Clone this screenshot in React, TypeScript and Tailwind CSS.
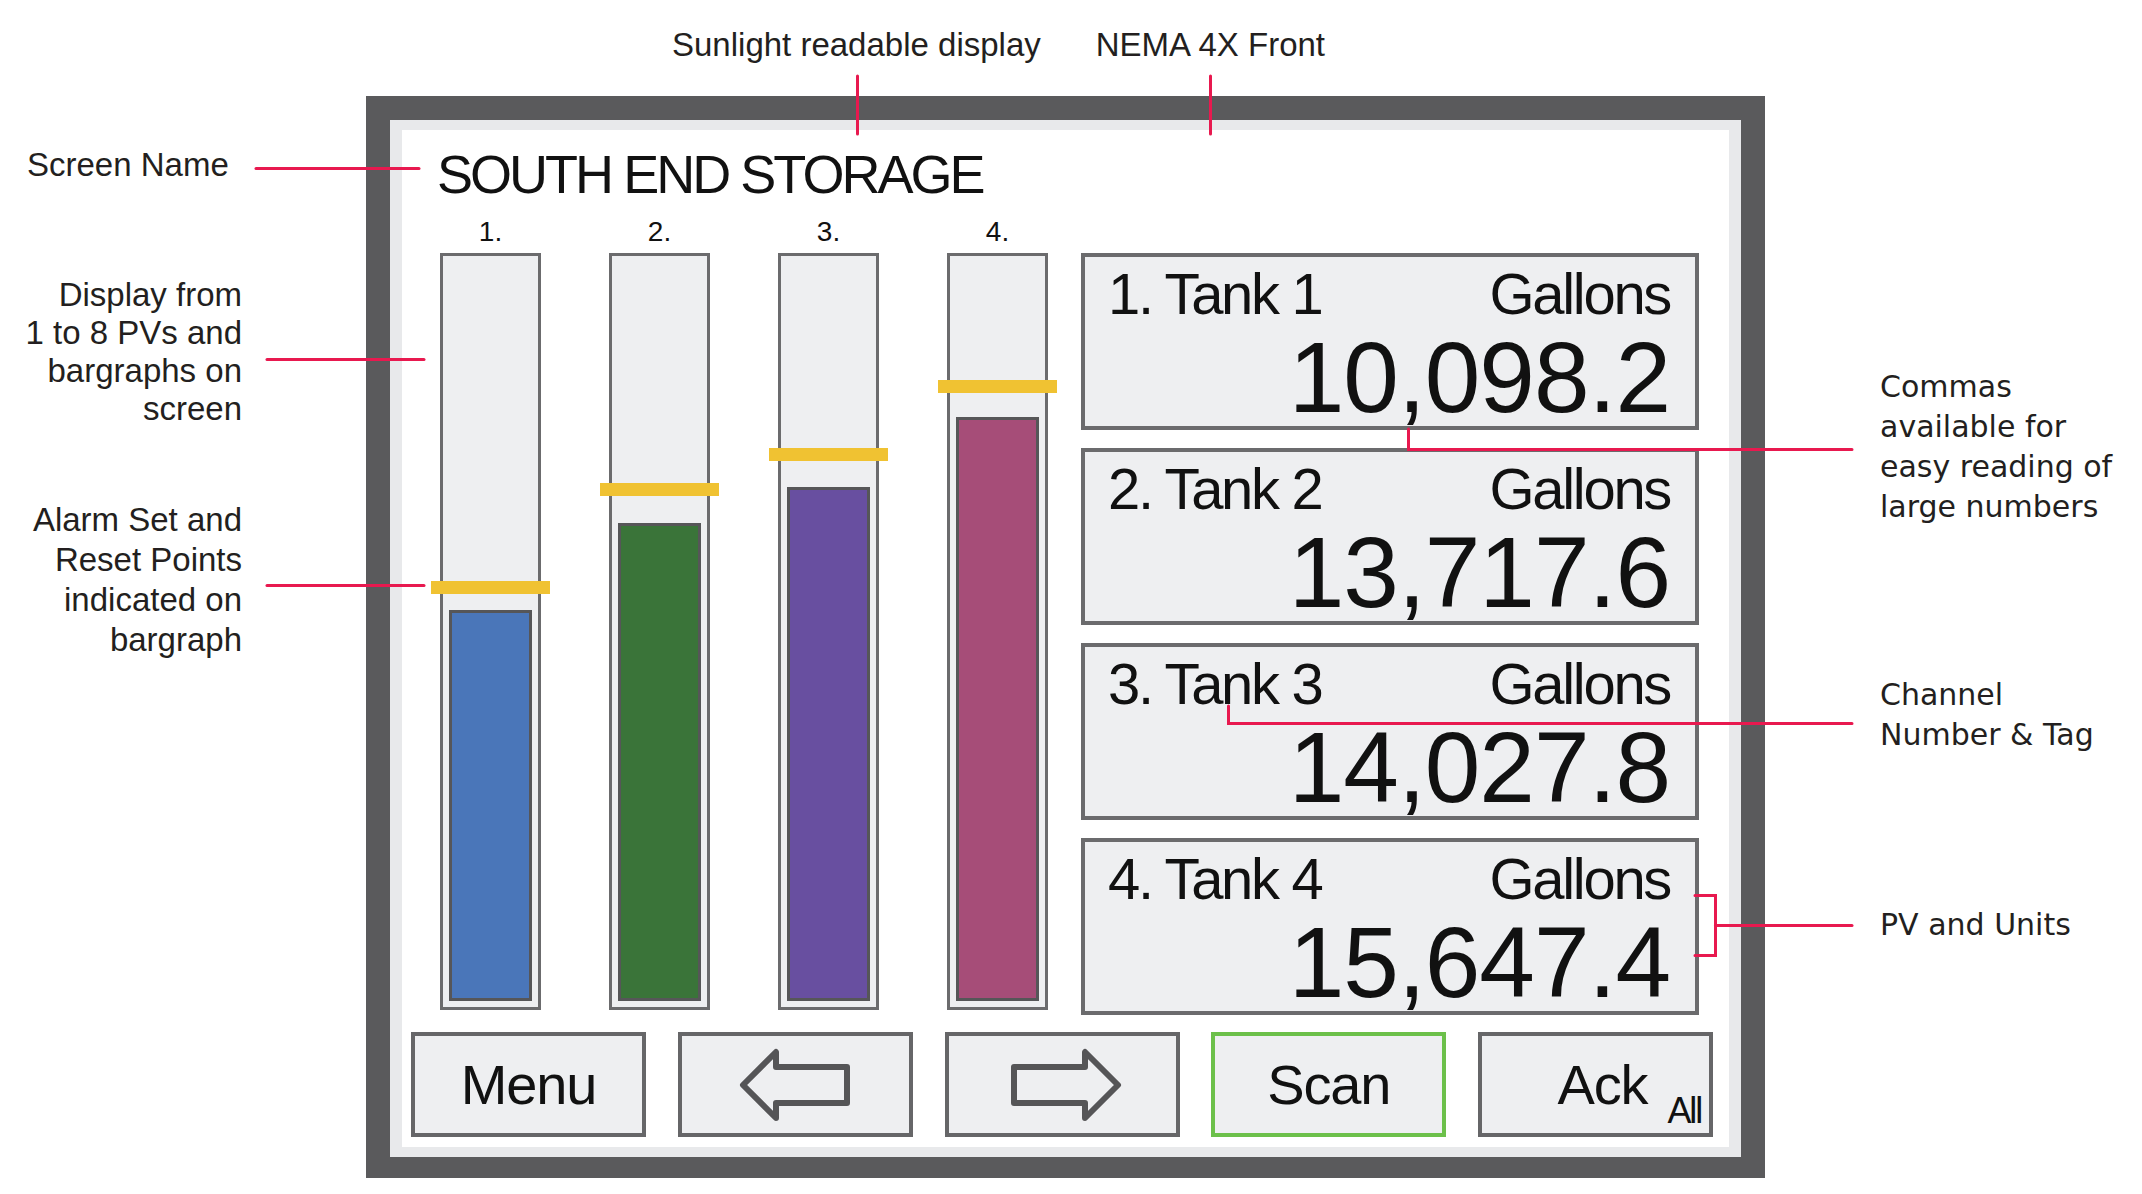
import React from 'react';

const bars = [
  { n: '1.', fill: 'bg-[#4a76b9]', height: 391, alarm: 325 },
  { n: '2.', fill: 'bg-[#3a7439]', height: 478, alarm: 227 },
  { n: '3.', fill: 'bg-[#684fa0]', height: 514, alarm: 192 },
  { n: '4.', fill: 'bg-[#a64d78]', height: 584, alarm: 124 },
];

const tanks = [
  { tag: '1. Tank 1', value: '10,098.2' },
  { tag: '2. Tank 2', value: '13,717.6' },
  { tag: '3. Tank 3', value: '14,027.8' },
  { tag: '4. Tank 4', value: '15,647.4' },
];

function Arrow({ dir }: { dir: 'left' | 'right' }) {
  return (
    <svg
      width="114"
      height="76"
      viewBox="0 0 114 76"
      className={dir === 'right' ? 'scale-x-[-1] translate-x-[4px]' : ''}
    >
      <path
        d="M5 38 L38 5 L38 20 L109 20 L109 56 L38 56 L38 71 Z"
        fill="none"
        stroke="#555557"
        strokeWidth="6"
        strokeLinejoin="round"
      />
    </svg>
  );
}

function Button({ children, green }: { children: React.ReactNode; green?: boolean }) {
  return (
    <div
      className={`w-[235px] h-[105px] border-[4px] bg-[#eeeff1] flex items-center justify-center text-[56px] leading-none tracking-[-0.02em] ${
        green ? 'border-[#6cc04a]' : 'border-[#666668]'
      }`}
    >
      {children}
    </div>
  );
}

// leader lines from the callouts to the display
function Leaders() {
  return (
    <svg
      className="absolute inset-0 pointer-events-none"
      width="2142"
      height="1194"
      viewBox="0 0 2142 1194"
      fill="none"
      stroke="#e8194f"
      strokeWidth="3"
      strokeLinecap="round"
    >
      <line x1="857.5" y1="76" x2="857.5" y2="134" />
      <line x1="1210.5" y1="76" x2="1210.5" y2="134" />
      <line x1="256" y1="168.5" x2="419" y2="168.5" />
      <line x1="267" y1="359.5" x2="424" y2="359.5" />
      <line x1="267" y1="585.5" x2="424" y2="585.5" />
      <polyline points="1408.5,429 1408.5,449.5 1852,449.5" />
      <polyline points="1228.5,706 1228.5,723.5 1852,723.5" />
      <polyline points="1695,895.5 1715.5,895.5 1715.5,955.5 1695,955.5" />
      <line x1="1715.5" y1="925.5" x2="1852" y2="925.5" />
    </svg>
  );
}

export default function App() {
  return (
    <div
      className="relative w-[2142px] h-[1194px] bg-white text-[#231f20] overflow-hidden flex"
      style={{ fontFamily: '"Liberation Sans", Arial, sans-serif' }}
    >
      {/* Left callouts */}
      <div className="w-[242px] mr-[124px] pt-[146px] text-[33px]">
        <div className="pl-[27px] leading-[38px]">Screen Name</div>
        <div className="mt-[92px] text-right leading-[38px]">
          Display from
          <br />1 to 8 PVs and
          <br />
          bargraphs on
          <br />
          screen
        </div>
        <div className="mt-[72px] text-right leading-[40px]">
          Alarm Set and
          <br />
          Reset Points
          <br />
          indicated on
          <br />
          bargraph
        </div>
      </div>

      {/* Device with top callouts */}
      <div className="w-[1399px] flex flex-col">
        <div className="h-[96px] pt-[25px] pl-[306px] flex gap-[55px] text-[33px] leading-[40px]">
          <span>Sunlight readable display</span>
          <span>NEMA 4X Front</span>
        </div>

        <div className="bg-[#5a5a5c] pt-[24px] px-[24px] pb-[21px]">
          <div className="border-x-[12px] border-y-[10px] border-[#e8e9eb] bg-white text-[#111]">
            {/* Screen name */}
            <div className="h-[91px] pl-[35px] pt-[17px]">
              <div className="text-[54px] leading-none tracking-[-0.055em]">SOUTH END STORAGE</div>
            </div>

            {/* Bargraphs + PV panels */}
            <div className="flex pl-[38px]">
              <div className="flex gap-[68px]">
                {bars.map((b) => (
                  <div key={b.n} className="w-[101px] flex flex-col">
                    <div className="h-[32px] text-center text-[28px] leading-[22px]">{b.n}</div>
                    <div className="relative h-[757px] border-[3px] border-[#6b6b6d] bg-[#eeeff1]">
                      <div
                        className={`absolute left-[6px] right-[6px] bottom-[6px] border-[3px] border-[#565658] ${b.fill}`}
                        style={{ height: b.height }}
                      />
                      <div
                        className="absolute -left-[12px] -right-[12px] h-[13px] bg-[#f0c232]"
                        style={{ top: b.alarm }}
                      />
                    </div>
                  </div>
                ))}
              </div>

              <div className="ml-[33px] w-[618px] pt-[32px] flex flex-col gap-[18px]">
                {tanks.map((t) => (
                  <div
                    key={t.tag}
                    className="h-[177px] border-[4px] border-[#6b6b6d] bg-[#eeeff1] pl-[23px] pr-[25px]"
                  >
                    <div className="mt-[8px] flex justify-between text-[58px] leading-none tracking-[-0.04em]">
                      <span>{t.tag}</span>
                      <span>Gallons</span>
                    </div>
                    <div className="mt-[4px] text-right text-[100px] leading-none tracking-[-0.01em]">
                      {t.value}
                    </div>
                  </div>
                ))}
              </div>
            </div>

            {/* Soft keys */}
            <div className="mt-[17px] pl-[9px] pr-[16px] pb-[10px] flex justify-between">
              <Button>Menu</Button>
              <Button>
                <Arrow dir="left" />
              </Button>
              <Button>
                <Arrow dir="right" />
              </Button>
              <Button green>Scan</Button>
              <div className="w-[235px] h-[105px] border-[4px] border-[#666668] bg-[#eeeff1] flex items-center justify-end pr-[8px] text-[56px] leading-none tracking-[-0.02em]">
                <span>Ack</span>
                <span className="self-end mb-[4px] ml-[20px] text-[36px] tracking-[-0.06em]">All</span>
              </div>
            </div>
          </div>
        </div>
      </div>

      {/* Right callouts */}
      <div
        className="ml-[115px] pt-[367px] text-[30px] leading-[40px]"
        style={{ fontFamily: '"DejaVu Sans", sans-serif' }}
      >
        <div>
          Commas
          <br />
          available for
          <br />
          easy reading of
          <br />
          large numbers
        </div>
        <div className="mt-[148px]">
          Channel
          <br />
          Number &amp; Tag
        </div>
        <div className="mt-[150px]">PV and Units</div>
      </div>

      <Leaders />
    </div>
  );
}
